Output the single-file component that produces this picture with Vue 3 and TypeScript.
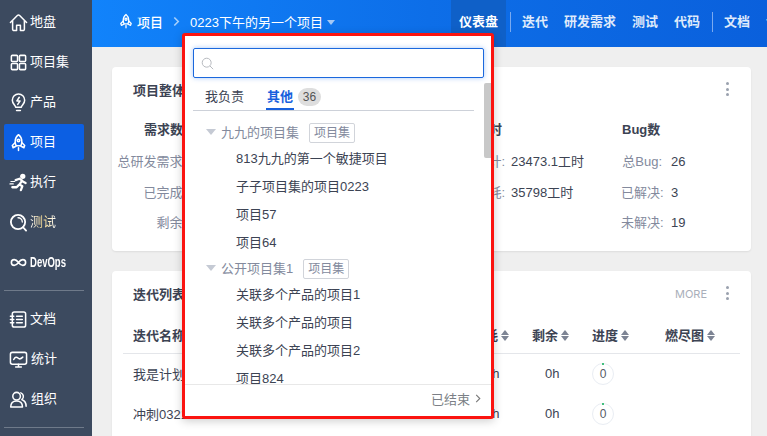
<script setup lang="ts">
interface NavItem { label: string; icon: string; active?: boolean; cls?: string }
const navTop: NavItem[] = [
  { label: '地盘', icon: 'home' },
  { label: '项目集', icon: 'grid' },
  { label: '产品', icon: 'bulb' },
  { label: '项目', icon: 'rocket', active: true },
  { label: '执行', icon: 'run' },
  { label: '测试', icon: 'search', cls: 'gold' },
  { label: 'DevOps', icon: 'inf', cls: 'devops' },
]
const navMid: NavItem[] = [
  { label: '文档', icon: 'doc' },
  { label: '统计', icon: 'chart' },
  { label: '组织', icon: 'users' },
]
const topLinks = ['迭代', '研发需求', '测试', '代码']
const reqRows = [['总研发需求', '26'], ['已完成', '3'], ['剩余', '23']]
const bugRows = [['总Bug', '26'], ['已解决', '3'], ['未解决', '19']]
const hourRows = [['总预计', '23473.1工时'], ['已消耗', '35798工时']]
const groups = [
  { name: '九九的项目集', items: ['813九九的第一个敏捷项目', '子子项目集的项目0223', '项目57', '项目64'] },
  { name: '公开项目集1', items: ['关联多个产品的项目1', '关联多个产品的项目', '关联多个产品的项目2', '项目824'] },
]
const rows = ['我是计划中的迭代', '冲刺0321']
</script>

<template>
  <div class="page">
    <aside class="side">
      <div v-for="n in navTop" :key="n.label" class="nav" :class="{ active: n.active }">
        <span class="nav-box">
          <svg class="ico" viewBox="0 0 20 20" fill="none" stroke="currentColor" stroke-width="1.6" stroke-linejoin="round" stroke-linecap="round">
            <template v-if="n.icon === 'home'"><path d="M1.500 10 8.800 2.700a1.700 1.700 0 0 1 2.400 0L18.500 10" /><path d="M3.800 8.500V17a1.500 1.500 0 0 0 1.500 1.500H8V13h4v5.500h2.700a1.500 1.500 0 0 0 1.500-1.500V8.500" /></template>
            <template v-else-if="n.icon === 'grid'"><rect x="2.500" y="2.500" width="6.500" height="6.500" rx="1" /><rect x="11" y="2.500" width="6.500" height="6.500" rx="1" /><rect x="2.500" y="11" width="6.500" height="6.500" rx="1" /><rect x="11" y="11" width="6.500" height="6.500" rx="1" /></template>
            <template v-else-if="n.icon === 'bulb'"><path d="M7 15c0-2-3.500-3.500-3.500-7.500a6.500 6.500 0 0 1 13 0c0 4-3.500 5.500-3.500 7.500Z" /><path d="M8 18.500h4" /><path d="M10.800 4.500 8.300 8.300h3.400L9.200 12" /></template>
            <template v-else-if="n.icon === 'rocket'"><path d="M10 1.800c2.500 2 3.500 4.500 3.500 7.200 0 1.500-.4 3-1 4.500h-5c-.6-1.500-1-3-1-4.500 0-2.700 1-5.200 3.500-7.200Z" /><circle cx="10" cy="7.800" r="1.300" /><path d="M6.600 10 3.500 13.200l.8 2.300 3-1.500M13.400 10l3.100 3.200-.8 2.300-3-1.500M10 15.500v3" /></template>
            <template v-else-if="n.icon === 'run'"><circle cx="14.500" cy="3.500" r="2" fill="currentColor" /><path stroke-width="2.400" d="M7 7.500 11 6l3 2-3 4 3 2-1.500 4M10.500 12.500 8 15H3.500M14.500 9l3 1.500" /><path stroke-width="1.200" d="M2 9h4M1 11.500h3.500" /></template>
            <template v-else-if="n.icon === 'search'"><circle cx="9.500" cy="9.500" r="7.500" stroke-width="1.900" /><path stroke-width="1.900" d="m14.800 15 3.200 3.500" /><path stroke-width="1.400" d="M9.500 5a4.500 4.500 0 0 1 4.500 4.500" /></template>
            <template v-else-if="n.icon === 'inf'"><path stroke-width="1.700" d="M10 10c-1.500-2-3-3-4.500-3a3 3 0 0 0 0 6c1.500 0 3-1 4.500-3Zm0 0c1.500 2 3 3 4.500 3a3 3 0 0 0 0-6c-1.500 0-3 1-4.500 3Z" /></template>
          </svg>
          <span class="nav-text" :class="n.cls">{{ n.label }}</span>
        </span>
      </div>
      <div class="rule"></div>
      <div v-for="n in navMid" :key="n.label" class="nav">
        <span class="nav-box">
          <svg class="ico" viewBox="0 0 20 20" fill="none" stroke="currentColor" stroke-width="1.600" stroke-linejoin="round" stroke-linecap="round">
            <template v-if="n.icon === 'doc'"><rect x="3.500" y="2" width="14" height="16" rx="2" /><path d="M8 6.500h6M8 10h6M8 13.500h6M1.500 6.500h3.500M1.500 10h3.500M1.500 13.500h3.500" /></template>
            <template v-else-if="n.icon === 'chart'"><rect x="1.500" y="2.500" width="17" height="12.500" rx="2" /><path d="M5 10c1.500-3 3-3 4.500-1.500s3 1 5-1M10 15v3M7 18h6" /></template>
            <template v-else><circle cx="8" cy="6.500" r="4" /><path d="M1.800 18c0-4 2.500-6.500 6.200-6.500s6.200 2.500 6.200 6.500ZM12.500 3a4 4 0 0 1 1 7c2.500 1 4.500 3.500 4.500 7" /></template>
          </svg>
          <span class="nav-text" :class="{ nudge: n.icon !== 'doc' }">{{ n.label }}</span>
        </span>
      </div>
      <div class="rule"></div>
    </aside>

    <div class="main">
      <header class="top">
        <div class="crumb">
          <svg class="crumb-ico" viewBox="0 0 20 20" fill="none" stroke="currentColor" stroke-width="1.600" stroke-linejoin="round" stroke-linecap="round"><path d="M10 1.800c2.500 2 3.500 4.500 3.500 7.200 0 1.500-.4 3-1 4.500h-5c-.6-1.500-1-3-1-4.500 0-2.700 1-5.200 3.500-7.200Z" /><circle cx="10" cy="7.800" r="1.300" /><path d="M6.600 10 3.500 13.200l.8 2.300 3-1.500M13.400 10l3.100 3.200-.8 2.300-3-1.500M10 15.500v3" /></svg>
          <span class="crumb-text">项目</span>
          <svg class="crumb-sep" viewBox="0 0 8 12" fill="none" stroke="currentColor" stroke-width="1.800"><path d="m1.500 1.500 4.500 4.500-4.500 4.500" /></svg>
          <span class="crumb-name">0223下午的另一个项目</span>
          <span class="caret"></span>
        </div>
        <nav class="links">
          <span class="link current">仪表盘</span>
          <span class="bar"></span>
          <span v-for="l in topLinks" :key="l" class="link">{{ l }}</span>
          <span class="bar"></span>
          <span class="link">文档</span>
          <span class="link">设置</span>
        </nav>
      </header>

      <div class="content">
        <section class="card one">
          <div class="card-head">
            <h3 class="title">项目整体情况</h3>
            <span class="dots"><i></i><i></i><i></i></span>
          </div>
          <div class="stats">
            <div class="stat req">
              <div class="stat-head">需求数</div>
              <div v-for="r in reqRows" :key="r[0]" class="stat-row"><span class="lab">{{ r[0] }}:</span><span class="val">{{ r[1] }}</span></div>
            </div>
            <div class="stat hours">
              <div class="stat-head">工时</div>
              <div v-for="r in hourRows" :key="r[0]" class="stat-row"><span class="lab">{{ r[0] }}:</span><span class="val">{{ r[1] }}</span></div>
            </div>
            <div class="stat bugs">
              <div class="stat-head">Bug数</div>
              <div v-for="r in bugRows" :key="r[0]" class="stat-row"><span class="lab">{{ r[0] }}:</span><span class="val">{{ r[1] }}</span></div>
            </div>
          </div>
        </section>

        <section class="card two">
          <div class="card-head">
            <h3 class="title">迭代列表</h3>
            <span class="more">MORE</span>
            <span class="dots"><i></i><i></i><i></i></span>
          </div>
          <div class="table">
            <div class="tr th">
              <span class="td name">迭代名称</span>
              <span class="td">消耗<b class="sort"></b></span>
              <span class="td">剩余<b class="sort"></b></span>
              <span class="td">进度<b class="sort"></b></span>
              <span class="td">燃尽图<b class="sort"></b></span>
            </div>
            <div v-for="r in rows" :key="r" class="tr body">
              <span class="td name">{{ r }}</span>
              <span class="td num">0h</span>
              <span class="td num">0h</span>
              <span class="td"><span class="ring">0</span></span>
              <span class="td"></span>
            </div>
          </div>
        </section>
      </div>
    </div>

    <div class="pop">
      <div class="search">
        <svg class="search-ico" viewBox="0 0 16 16" fill="none" stroke="#b5b8bd" stroke-width="1.200"><circle cx="7" cy="7" r="5.500" /><path d="m11 11 4 4" /></svg>
      </div>
      <div class="tabs">
        <span class="tab">我负责</span>
        <span class="tab on">其他</span>
        <span class="badge">36</span>
      </div>
      <div class="tree">
        <div v-for="g in groups" :key="g.name" class="group">
          <div class="group-head">
            <span class="tri"></span>
            <span class="group-name">{{ g.name }}</span>
            <span class="tag">项目集</span>
          </div>
          <div v-for="i in g.items" :key="i" class="leaf">{{ i }}</div>
        </div>
      </div>
      <span class="thumb"></span>
      <div class="foot">
        已结束
        <svg class="foot-ico" viewBox="0 0 6 10" fill="none" stroke="#777" stroke-width="1.200"><path d="m1 1 4 4-4 4" /></svg>
      </div>
    </div>
  </div>
</template>

<style>
html, body { margin: 0; background: #efefef; overflow: hidden; }
</style>

<style scoped>
.page {
  position: relative;
  display: flex;
  width: 767px;
  height: 436px;
  overflow: hidden;
  font-family: "Liberation Sans", "Noto Sans CJK SC", sans-serif;
  font-size: 13px;
  color: #3c4353;
  background: #efefef;
}
.side {
  flex: 0 0 92px;
  width: 92px;
  min-width: 0;
  overflow: hidden;
  box-sizing: border-box;
  padding-top: 2px;
  background: #3c4a5f;
  color: #fff;
}
.nav { height: 40px; padding: 2px 8px 2px 4px; box-sizing: border-box; }
.nav-box {
  display: flex;
  align-items: center;
  gap: 2px;
  height: 36px;
  padding-left: 5px;
  border-radius: 2px;
  box-sizing: border-box;
}
.nav.active .nav-box { background: #0c5fe3; }
.ico { width: 19px; height: 19px; flex: none; }
.nav-text { line-height: 18px; white-space: nowrap; }
.nudge { margin-left: 1px; }
.gold { background: linear-gradient(90deg, #fff 0%, #ffdf8c 50%, #fff 100%); -webkit-background-clip: text; background-clip: text; color: transparent; }
.devops { font-weight: 700; font-size: 14px; transform: scaleX(.68); transform-origin: left center; }
.rule { height: 1px; margin: 8px 8px 8px 4px; background: #6f7a8a; }
.main { flex: 1; min-width: 0; display: flex; flex-direction: column; }
.top {
  flex: 0 0 47px;
  display: flex;
  align-items: center;
  justify-content: space-between;
  padding-left: 26px;
  background: linear-gradient(90deg, #1183fb 0%, #0d6ee8 50%, #0a60dc 100%);
  color: #fff;
  overflow: hidden;
}
.crumb { display: flex; align-items: center; padding-bottom: 5px; }
.crumb-ico { width: 16px; height: 16px; margin-right: 3px; }
.crumb-text { margin-right: 10px; font-weight: 500; }
.crumb-sep { width: 7px; height: 11px; margin-right: 10px; color: #a8d0fb; }
.caret { width: 0; height: 0; margin: 3px 0 0 4px; border: 4px solid transparent; border-top: 5px solid #a4c8f5; border-bottom: 0; }
.links { display: flex; align-items: center; height: 47px; flex: none; width: 316px; white-space: nowrap; }
.link { padding: 0 8px 4px; height: 47px; box-sizing: border-box; font-weight: 700; color: #dfeafb; line-height: 43px; }
.link.current { width: 55px; background: #0f60c8; color: #fff; flex: none; }
.bar { width: 1px; height: 20px; margin: 0 3px 3px 4px; background: #7aaaf0; flex: none; }
.content { flex: 1; padding: 20px 16px 0 20px; display: flex; flex-direction: column; gap: 20px; min-height: 0; }
.card { background: #fff; border-radius: 4px; box-shadow: 0 1px 2px rgba(0, 0, 0, .08); box-sizing: border-box; flex: none; }
.one { height: 184px; }
.two { height: 220px; }
.card-head { display: flex; align-items: center; height: 44px; padding: 0 22px 0 21px; }
.title { margin: 0; flex: 1; font-size: 13px; font-weight: 700; color: #3c4353; }
.more { font-family: Inter, "Liberation Sans", sans-serif; font-size: 11px; color: #a9afba; margin-right: 19px; padding-top: 1px; }
.dots { display: flex; flex-direction: column; gap: 2.500px; }
.dots i { width: 3px; height: 3px; border-radius: 50%; background: #9aa1ae; }
.stats { display: grid; grid-template-columns: 310px 199px 1fr; padding-top: 8px; }
.stat-head { font-weight: 700; height: 20px; line-height: 20px; margin-bottom: 12px; padding-top: 1px; white-space: nowrap; }
.stat-row { display: flex; height: 30.500px; line-height: 20px; white-space: nowrap; }
.lab { color: #838a9d; text-align: right; flex: none; display: block; }
.val { color: #3c4353; }
.req .stat-head { padding-left: 32px; }
.req .stat-row { padding-left: 4px; }
.req .lab { width: 70px; margin-right: 9px; }
.hours .stat-head { padding-left: 54px; }
.hours .lab { width: 83px; margin-right: 6px; }
.bugs .stat-head { padding-left: 1px; }
.bugs .lab { width: 41px; margin-right: 9px; }
.table { padding: 0 11px; }
.tr { display: grid; grid-template-columns: 349px 60px 60px 73px 75px; align-items: center; }
.th { height: 38px; font-weight: 700; border-bottom: 1px solid #e4e6ea; }
.body { height: 40px; }
.td { white-space: nowrap; }
.name { padding-left: 10px; }
.body .name, .num { padding-bottom: 2px; }
.num { padding-left: 13px; }
.sort { display: inline-block; vertical-align: -1px; width: 9px; height: 11px; margin-left: 3px; position: relative; }
.sort::before, .sort::after { content: ""; position: absolute; left: 0; border: 4.500px solid transparent; }
.sort::before { top: 0; border-bottom: 5px solid #7d8494; border-top: 0; }
.sort::after { bottom: 0; border-top: 5px solid #7d8494; border-bottom: 0; }
.ring {
  position: relative;
  display: flex;
  align-items: center;
  justify-content: center;
  width: 22px;
  height: 22px;
  border: 1px solid #e9edf3;
  border-radius: 50%;
  box-sizing: border-box;
  font-size: 12px;
  color: #555b66;
}
.ring::before { content: ""; position: absolute; top: -1px; left: 9px; width: 2px; height: 2px; background: #43c07e; }
.pop {
  position: absolute;
  left: 182px;
  top: 33px;
  width: 312px;
  height: 386px;
  box-sizing: border-box;
  border: 3px solid #fb1410;
  border-radius: 3px;
  background: #fff;
  box-shadow: 0 2px 10px rgba(0, 0, 0, .2);
  display: flex;
  flex-direction: column;
}
.search {
  flex: none;
  height: 30px;
  margin: 12px 7px 0 8px;
  border: 1px solid #1b68dd;
  border-radius: 2px;
  box-shadow: 0 0 5px rgba(40, 120, 240, .4);
  display: flex;
  align-items: center;
  padding-left: 7px;
  box-sizing: border-box;
}
.search-ico { width: 13px; height: 13px; }
.tabs {
  flex: none;
  display: flex;
  align-items: center;
  box-sizing: border-box;
  height: 33px;
  padding-top: 6px;
  margin: 0 17px 0 8px;
  border-bottom: 1px solid #cdd1d9;
}
.tab { position: relative; line-height: 26px; }
.tab:first-child { margin-left: 12px; margin-right: 23px; }
.tab.on { color: #1760dd; font-weight: 700; }
.tab.on::after { content: ""; position: absolute; left: -1px; right: -1px; bottom: 0; height: 2px; background: #1760dd; }
.badge { margin-left: 5px; width: 23px; height: 18px; line-height: 18px; border-radius: 9px; background: #dedede; text-align: center; font-size: 12px; color: #555; }
.tree { flex: 1; min-height: 0; overflow: hidden; padding-top: 9px; padding-left: 21px; }
.group-head { display: flex; align-items: center; height: 24px; color: #838a9d; }
.group-name { padding-bottom: 1px; }
.tri { width: 0; height: 0; border: 5px solid transparent; border-top: 6px solid #c5cad4; border-bottom: 0; margin-right: 5px; }
.tag { margin: 2px 0 0 10px; height: 20px; line-height: 18px; padding: 0 4px; box-sizing: border-box; border: 1px solid #d1d4da; border-radius: 2px; font-size: 12px; color: #838a9d; }
.leaf { height: 28px; line-height: 30px; padding-left: 30px; color: #3c4353; }
.thumb { position: absolute; left: 299px; top: 47px; width: 7px; height: 75px; background: #c8c8c8; border-radius: 2px 0 0 2px; }
.foot { flex: none; height: 32px; box-sizing: border-box; border-top: 1px solid #e8e8e8; padding: 0 10px 5px 0; display: flex; align-items: center; justify-content: flex-end; color: #7b7f86; gap: 5px; }
.foot-ico { width: 6px; height: 9px; }
</style>
